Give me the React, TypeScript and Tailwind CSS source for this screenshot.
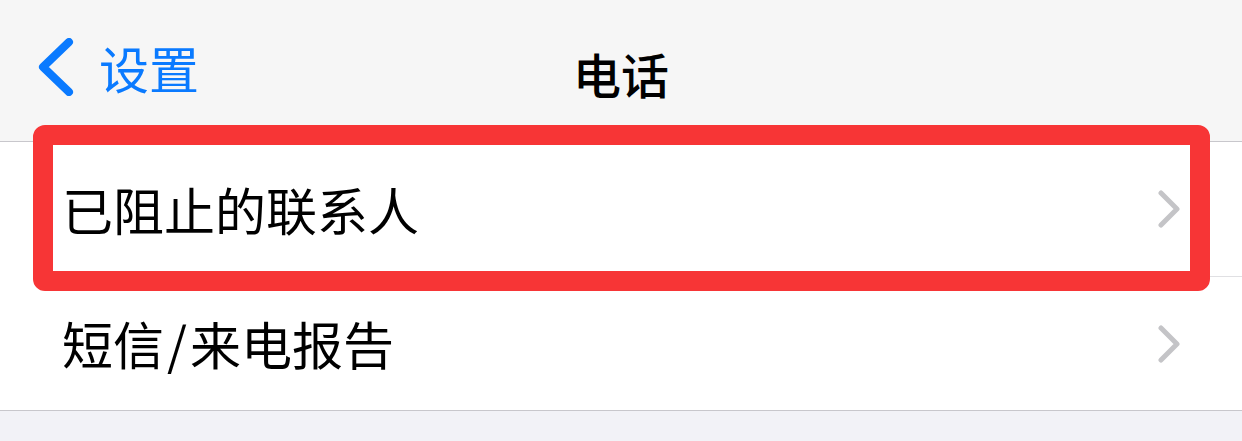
const cjk = { fontFamily: '"Noto Sans CJK SC", "Noto Sans", sans-serif' };

const Chevron = () => (
  <svg width="24" height="38" viewBox="0 0 24 38" fill="none" className="shrink-0">
    <path d="M4 3 L20 19 L4 35" stroke="#c4c4c7" strokeWidth="5" strokeLinecap="round" strokeLinejoin="round" />
  </svg>
);

export default function App() {
  return (
    <div className="relative w-[1242px] h-[441px] bg-[#f2f2f7] overflow-hidden" style={cjk}>
      <div className="relative h-[142px] bg-[#f6f6f6] border-b border-[#c8c7cc] flex items-center">
        <div className="flex items-center pl-[38px] gap-[25px] -mt-[8px]">
          <svg width="36" height="58" viewBox="0 0 36 58" fill="none">
            <path d="M31 4 L5 29 L31 54" stroke="#0a7aff" strokeWidth="8" strokeLinecap="round" strokeLinejoin="round" />
          </svg>
          <span className="text-[50px] leading-none text-[#0a7aff]">设置</span>
        </div>
        <div className="absolute inset-x-0 top-[49px] flex justify-center">
          <span className="text-[48px] leading-none font-medium text-black">电话</span>
        </div>
      </div>

      <div className="pl-[62px] bg-white">
        <div className="flex items-center justify-between pr-[61px] h-[135px] border-b border-[#e0e0e3]">
          <span className="text-[51px] leading-none text-black">已阻止的联系人</span>
          <Chevron />
        </div>
      </div>

      <div className="flex items-center justify-between pl-[62px] pr-[61px] h-[134px] bg-white border-b border-[#c8c7cc]">
        <span className="text-[51px] leading-none text-black">
          短信<span className="px-[3px]">/</span>来电报告
        </span>
        <Chevron />
      </div>

      <div className="absolute left-[33px] top-[125px] w-[1177px] h-[166px] border-[20px] border-[#f73536] rounded-[12px]" />
    </div>
  );
}
